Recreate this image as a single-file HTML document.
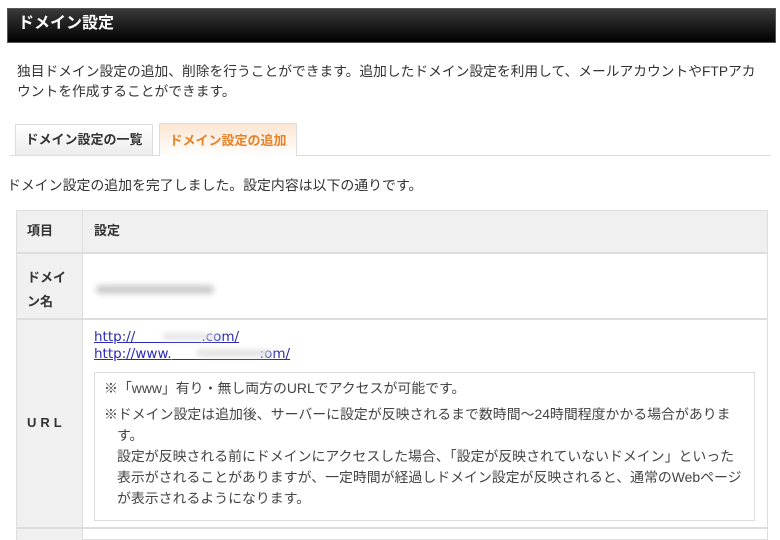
<!DOCTYPE html>
<html><head><meta charset="utf-8"><style>
*{margin:0;padding:0;box-sizing:border-box}
body{width:780px;height:540px;background:#fff;position:relative;overflow:hidden;font-family:"Liberation Sans","Noto Sans CJK JP",sans-serif;color:#333;font-size:13px}
.a{position:absolute;white-space:nowrap;line-height:1}
#hd{position:absolute;left:7px;top:8px;width:769px;height:35px;background:linear-gradient(#3a3a3a,#000);border:1px solid #555}
#hd span{position:absolute;left:10px;top:5px;color:#fff;font-weight:bold;font-size:16px;line-height:20px}
.tab{position:absolute;border:1px solid #ddd;border-bottom:none;font-weight:bold;font-size:13px;text-align:center}
.line{position:absolute;background:#ddd}
.cell{position:absolute;border:1px solid #ddd}
a{color:#2a2ab8;text-decoration:underline}
.lk{font-family:"DejaVu Sans","Noto Sans CJK JP",sans-serif;font-size:13.5px}
.blur{position:absolute;background:#ccc;filter:blur(3px);border-radius:4px}
.n{font-size:13.9px;color:#444}
</style></head><body>
<div id="hd"><span>ドメイン設定</span></div>
<div class="a" style="left:17px;top:65px;font-size:13.75px">独目ドメイン設定の追加、削除を行うことができます。追加したドメイン設定を利用して、メールアカウントやFTPアカ</div>
<div class="a" style="left:17px;top:85px;font-size:13.75px">ウントを作成することができます。</div>
<div class="line" style="left:10px;top:155px;width:761px;height:1px"></div>
<div class="tab" style="left:15px;top:124px;width:138px;height:31px;background:linear-gradient(#fff,#ececec);line-height:30px;color:#333">ドメイン設定の一覧</div>
<div class="tab" style="left:159px;top:123px;width:138px;height:33px;background:linear-gradient(#fbe6d2,#fff);line-height:34px;color:#e8822a">ドメイン設定の追加</div>
<div class="a" style="left:7px;top:179px;font-size:13.9px">ドメイン設定の追加を完了しました。設定内容は以下の通りです。</div>
<div class="cell" style="left:16px;top:210px;width:752px;height:330px;background:#fff"></div>
<div style="position:absolute;left:17px;top:211px;width:66px;height:329px;background:#f0f0f0"></div>
<div style="position:absolute;left:17px;top:211px;width:750px;height:41px;background:#f0f0f0"></div>
<div class="line" style="left:82px;top:211px;width:1px;height:329px"></div>
<div class="line" style="left:16px;top:252px;width:752px;height:2px"></div>
<div class="line" style="left:16px;top:318px;width:752px;height:2px"></div>
<div class="line" style="left:16px;top:527px;width:752px;height:2px"></div>
<div class="a" style="left:27px;top:224px;font-weight:bold;font-size:13px">項目</div>
<div class="a" style="left:94px;top:224px;font-weight:bold;font-size:13px">設定</div>
<div class="a" style="left:27px;top:266px;font-weight:bold;font-size:13px;line-height:24px;white-space:normal">ドメイ<br>ン名</div>
<div class="blur" style="left:96px;top:285px;width:118px;height:9px"></div>
<div class="a" style="left:27px;top:416px;font-weight:bold;font-size:13px;letter-spacing:4px">URL</div>
<div class="a lk" style="left:94px;top:331px"><a>http://</a><span style="display:inline-block;width:66px;height:1px;background:#2a2ab8;vertical-align:-2px"></span><a>.com/</a></div>
<div class="blur" style="left:162px;top:334px;width:56px;height:5px;background:#ddd"></div>
<div class="a lk" style="left:94px;top:348px"><a>http://www.</a><span style="display:inline-block;width:88px;height:1px;background:#2a2ab8;vertical-align:-2px"></span><a>:om/</a></div>
<div class="blur" style="left:196px;top:350px;width:76px;height:6px;background:#ddd"></div>
<div class="cell" style="left:94px;top:372px;width:661px;height:149px;background:#fff"></div>
<div class="a n" style="left:104px;top:382px">※「www」有り・無し両方のURLでアクセスが可能です。</div>
<div class="a n" style="left:104px;top:408px">※ドメイン設定は追加後、サーバーに設定が反映されるまで数時間～24時間程度かかる場合がありま</div>
<div class="a n" style="left:117px;top:429px">す。</div>
<div class="a n" style="left:117px;top:450px">設定が反映される前にドメインにアクセスした場合、「設定が反映されていないドメイン」といった</div>
<div class="a n" style="left:117px;top:471px">表示がされることがありますが、一定時間が経過しドメイン設定が反映されると、通常のWebページ</div>
<div class="a n" style="left:117px;top:492px">が表示されるようになります。</div>
</body></html>
